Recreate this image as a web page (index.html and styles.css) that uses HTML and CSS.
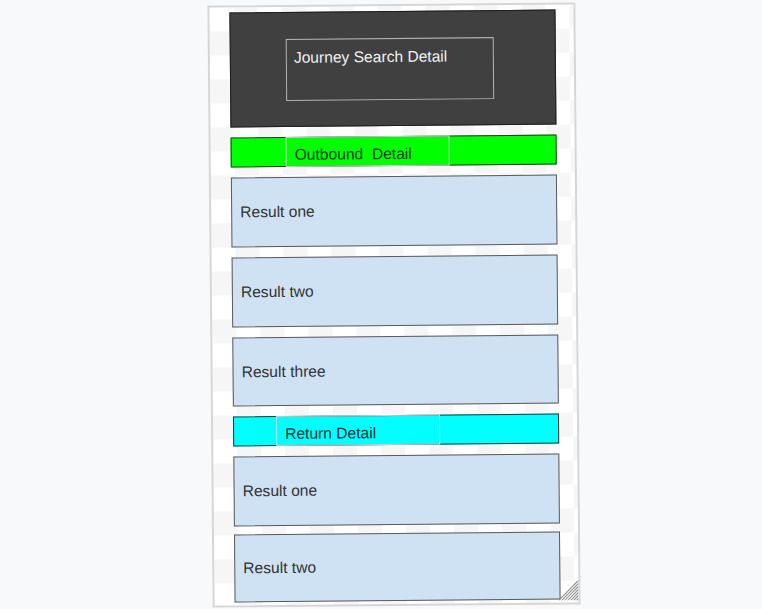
FILE: index.html
```html
<!DOCTYPE html>
<html>
<head>
<meta charset="utf-8">
<link rel="stylesheet" href="styles.css">
</head>
<body>
<div class="frame">
  <div class="header">
    <div class="title-box">Journey Search Detail</div>
  </div>
  <div class="bar bar-outbound"><div class="bar-label">Outbound&nbsp; Detail</div></div>
  <div class="result">Result one</div>
  <div class="result">Result two</div>
  <div class="result result-short">Result three</div>
  <div class="bar bar-return"><div class="bar-label">Return Detail</div></div>
  <div class="result">Result one</div>
  <div class="result result-last">Result two</div>
  <svg class="grip" width="20" height="20" viewBox="0 0 20 20">
    <g stroke="#8a8a8a" stroke-width="1">
      <line x1="18" y1="20" x2="20" y2="18"/>
      <line x1="15" y1="20" x2="20" y2="15"/>
      <line x1="12" y1="20" x2="20" y2="12"/>
      <line x1="9" y1="20" x2="20" y2="9"/>
      <line x1="6" y1="20" x2="20" y2="6"/>
      <line x1="3" y1="20" x2="20" y2="3"/>
      <line x1="0" y1="20" x2="20" y2="0"/>
    </g>
  </svg>
</div>
</body>
</html>
```

FILE: styles.css
```css
html, body {
  margin: 0;
  padding: 0;
}
body {
  background: #f8f9fb;
  width: 762px;
  height: 609px;
  overflow: hidden;
  font-family: "Liberation Sans", Arial, sans-serif;
}
.frame {
  position: relative;
  box-sizing: border-box;
  width: 368px;
  height: 602px;
  margin: 4px 0 0 210px;
  border: 2px solid #d6d6d6;
  background-color: #ffffff;
  background-image: repeating-conic-gradient(#f6f6f6 0 25%, #ffffff 0 50%);
  background-size: 48px 48px;
  padding: 5px 18px 0 20px;
  display: flex;
  flex-direction: column;
  gap: 10px;
  transform: rotate(-0.5deg);
}
.header {
  box-sizing: border-box;
  height: 115px;
  background: #404040;
  border: 1px solid #1e1e1e;
  padding: 26px 0 0 55px;
  flex: none;
}
.title-box {
  box-sizing: border-box;
  width: 208px;
  height: 62px;
  border: 1px solid #b4b4b4;
  padding: 9px 7px;
  color: #f0f0f0;
  font-size: 15.6px;
  line-height: 17px;
}
.bar {
  box-sizing: border-box;
  height: 30px;
  border: 1px solid #333333;
  flex: none;
}
.bar-outbound {
  background: #00ff00;
  padding-left: 54px;
}
.bar-return {
  background: #00ffff;
  padding-left: 42px;
}
.bar-label {
  box-sizing: border-box;
  width: 164px;
  height: 30px;
  margin-top: -1px;
  border: 1px solid rgba(255, 255, 255, 0.75);
  padding: 5px 0 0 8px;
  font-size: 15.6px;
  line-height: 24px;
}
.bar-outbound .bar-label {
  color: #0b3a0b;
}
.bar-return .bar-label {
  color: #0b3333;
}
.result {
  box-sizing: border-box;
  height: 70px;
  background: #cfe2f3;
  border: 1px solid #5a5a5a;
  display: flex;
  align-items: center;
  padding-left: 8px;
  font-size: 15.6px;
  color: #333333;
  flex: none;
}
.result-short {
  height: 69px;
}
.result-last {
  height: 68px;
  margin-top: -2px;
}
.grip {
  position: absolute;
  right: 0;
  bottom: 2px;
}
```
